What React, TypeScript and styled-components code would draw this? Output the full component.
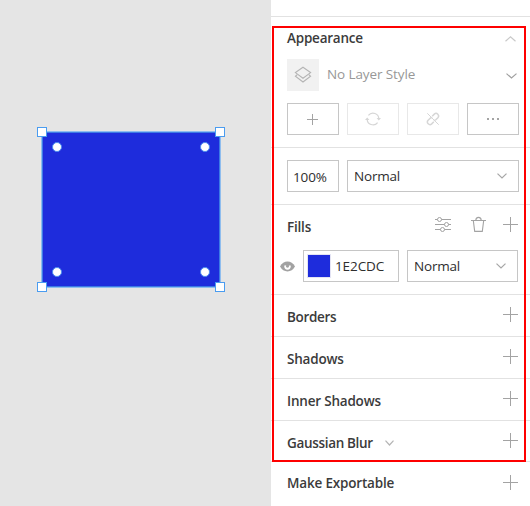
import React from "react";
import styled, { createGlobalStyle } from "styled-components";

const GlobalStyle = createGlobalStyle`
  *, *::before, *::after { box-sizing: border-box; }
  body { margin: 0; background: #fff; overflow: hidden; font-family: "Open Sans", "Noto Sans", sans-serif; }
  svg { display: block; flex: none; }
`;

const Workspace = styled.main`
  position: relative;
  display: flex;
  width: 530px;
  height: 506px;
  overflow: hidden;
`;

const Canvas = styled.div`
  position: relative;
  flex: none;
  width: 271px;
  background: #e5e5e5;
`;

const Shape = styled.div`
  position: absolute;
  left: 41px;
  top: 131px;
  width: 180px;
  height: 157px;
  background: #1e2cdc;
  border: 1px solid #8fbdee;
  box-shadow: inset 0 0 0 1px #3c7ae6;
`;

const Handle = styled.i<{ $x: number; $y: number }>`
  position: absolute;
  left: ${(p) => p.$x}px;
  top: ${(p) => p.$y}px;
  width: 10px;
  height: 10px;
  background: #fff;
  border: 1px solid #4a9cf0;
`;

const Dot = styled.i<{ $x: number; $y: number }>`
  position: absolute;
  left: ${(p) => p.$x}px;
  top: ${(p) => p.$y}px;
  width: 10px;
  height: 10px;
  border-radius: 50%;
  background: #fff;
  border: 1px solid #4a8cf0;
`;

const Inspector = styled.aside`
  flex: 1;
  margin-top: 16px;
  background: #fff;
`;

const Section = styled.section<{ $height: number; $top?: number }>`
  height: ${(p) => p.$height}px;
  padding: ${(p) => p.$top ?? 0}px 11px 0 16px;
  border-top: 1px solid #e2e2e2;
`;

const Row = styled.div<{ $gap?: number; $mt?: number }>`
  display: flex;
  align-items: flex-start;
  gap: ${(p) => p.$gap ?? 0}px;
  margin-top: ${(p) => p.$mt ?? 0}px;
`;

const Title = styled.h2<{ $ls: number; $mt?: number }>`
  margin: ${(p) => p.$mt ?? 0}px 0 0;
  font-size: 13.5px;
  line-height: 20px;
  font-weight: 600;
  letter-spacing: ${(p) => p.$ls}px;
  white-space: nowrap;
  color: #3b3b3b;
`;

const Value = styled.span<{ $ls?: number; $mt?: number; $muted?: boolean }>`
  margin-top: ${(p) => p.$mt ?? 0}px;
  font-size: 13.5px;
  line-height: 20px;
  letter-spacing: ${(p) => p.$ls ?? -0.1}px;
  white-space: nowrap;
  color: ${(p) => (p.$muted ? "#989898" : "#2e2e2e")};
`;

const Push = styled.span<{ $mt?: number; $mr?: number }>`
  margin: ${(p) => p.$mt ?? 0}px ${(p) => p.$mr ?? 0}px 0 auto;
`;

const StylePreview = styled.span`
  display: grid;
  place-items: center;
  width: 32px;
  height: 32px;
  background: #f1f1f1;
`;

const IconButton = styled.button<{ $dim?: boolean }>`
  display: grid;
  place-items: center;
  width: 52px;
  height: 32px;
  padding: 0 1px 0 0;
  background: #fff;
  border: 1px solid ${(p) => (p.$dim ? "#e8e8e8" : "#c6c6c6")};
  color: ${(p) => (p.$dim ? "#d6d6d6" : "#a4a4a4")};
`;

const Field = styled.div<{ $width: number; $left: number }>`
  display: flex;
  align-items: flex-start;
  width: ${(p) => p.$width}px;
  height: 32px;
  padding: 0 0 0 ${(p) => p.$left}px;
  border: 1px solid #c6c6c6;
`;

const Swatch = styled.span`
  width: 24px;
  height: 24px;
  margin: 3px 4px 0 0;
  background: #1e2cdc;
  border: 1px solid #e4e4f4;
`;

const Highlight = styled.div`
  position: absolute;
  left: 272px;
  top: 26px;
  width: 254px;
  height: 436px;
  border: 2px solid #fe0000;
  pointer-events: none;
`;

const IconSlot = styled.span<{ $mt?: number; $ml?: number; $mr?: number }>`
  margin: ${(p) => p.$mt ?? 0}px ${(p) => p.$mr ?? 0}px 0 ${(p) => p.$ml ?? 0}px;
`;

const Plus = ({ size = 15 }: { size?: number }) => (
  <svg width={size} height={size} viewBox={`0 0 ${size} ${size}`} stroke="#a3a3a3">
    <path d={`M0 ${size / 2}H${size}M${size / 2} 0V${size}`} />
  </svg>
);

const Chevron = ({ w = 9, h = 5, up = false, color = "#a6a6a6" }: { w?: number; h?: number; up?: boolean; color?: string }) => (
  <svg width={w + 1} height={h + 1} viewBox={`0 0 ${w + 1} ${h + 1}`} fill="none" stroke={color} strokeWidth="1.2">
    <path d={up ? `M.5 ${h + 0.2}L${(w + 1) / 2} .8L${w + 0.5} ${h + 0.2}` : `M.5 .6L${(w + 1) / 2} ${h}L${w + 0.5} .6`} />
  </svg>
);

const Layers = () => (
  <svg width="18" height="18" viewBox="0 0 18 18" fill="none" stroke="#b4b4b4" strokeWidth="1.1">
    <path d="M9 1.2L16.6 6.6L9 12.2L1.4 6.6Z" />
    <path d="M3.2 8.6L1.4 10.3L9 16L16.6 10.3L14.8 8.6" />
  </svg>
);

const Sync = () => (
  <svg width="16" height="14" viewBox="0 0 16 14" fill="none" stroke="currentColor" strokeWidth="1.2">
    <path d="M3.4 3.4A5.8 5.8 0 0 1 13.8 7.2M12.6 10.6A5.8 5.8 0 0 1 2.2 6.8" />
    <path d="M11.6 6L13.8 8.6L16 6ZM0 8L2.2 5.4L4.4 8Z" fill="currentColor" stroke="none" />
  </svg>
);

const Unlink = () => (
  <svg width="14" height="14" viewBox="0 0 14 14" fill="none" stroke="currentColor" strokeWidth="1.5">
    <path d="M6.2 4.2L8.3 2.1A2.55 2.55 0 0 1 11.9 5.7L9.8 7.8Q8.9 8.6 7.8 8.3M7.8 9.8L5.7 11.9A2.55 2.55 0 0 1 2.1 8.3L4.2 6.2Q5.1 5.4 6.2 5.7" />
    <path d="M1.3 1.3L12.7 12.7" strokeWidth="1" />
  </svg>
);

const More = () => (
  <svg width="14" height="4" viewBox="0 0 14 4" fill="#a4a4a4">
    <path d="M1 1h2v2h-2zM6 1h2v2h-2zM11 1h2v2h-2z" />
  </svg>
);

const Sliders = () => (
  <svg width="16" height="16" viewBox="0 0 16 16" fill="none" stroke="#a3a3a3">
    <path d="M0 3.5H2.5M6.5 3.5H16M0 8.5H9.5M13.5 8.5H16M0 13.5H5.5M9.5 13.5H16" />
    <circle cx="4.5" cy="3.5" r="2" />
    <circle cx="11.5" cy="8.5" r="2" />
    <circle cx="7.5" cy="13.5" r="2" />
  </svg>
);

const Trash = () => (
  <svg width="15" height="16" viewBox="0 0 15 16" fill="none" stroke="#a3a3a3" strokeWidth="1.1">
    <path d="M0 4.5H15M2.3 4.5L3.7 15.4H11.3L12.7 4.5M4.8 4.5C4.8 .3 10.2 .3 10.2 4.5" />
  </svg>
);

const Eye = () => (
  <svg width="15" height="11" viewBox="0 0 15 11">
    <path d="M0 5.5Q2.8 .6 7.5 .6T15 5.5Q12.2 10.4 7.5 10.4T0 5.5Z" fill="#a2a2a2" />
    <path d="M4.3 4.6A3.3 3.3 0 1 0 10.7 4.6L9.2 4.4A1.8 1.8 0 0 1 7.2 4.3Z" fill="#fff" />
    <circle cx="7.5" cy="5.1" r="1.6" fill="#a2a2a2" />
  </svg>
);

const effects = [
  { name: "Borders", ls: -0.35, height: 42 },
  { name: "Shadows", ls: -0.2, height: 42 },
  { name: "Inner Shadows", ls: -0.2, height: 42 },
  { name: "Gaussian Blur", ls: -0.33, height: 41, options: true },
  { name: "Make Exportable", ls: -0.18, height: 45, top: 11, plusTop: 2 },
];

const corners = [[37, 127], [215, 127], [37, 282], [215, 282]];
const radii = [[52, 142], [200, 142], [52, 267], [200, 267]];

export default function App() {
  return (
    <>
      <GlobalStyle />
      <Workspace>
        <Canvas>
          <Shape />
          {corners.map(([x, y]) => <Handle key={`${x}-${y}`} $x={x} $y={y} />)}
          {radii.map(([x, y]) => <Dot key={`${x}-${y}`} $x={x} $y={y} />)}
        </Canvas>
        <Inspector>
          <Section $height={131} $top={11}>
            <Row>
              <Title $ls={-0.22}>Appearance</Title>
              <Push $mt={8} $mr={3}><Chevron w={10} up color="#c9c9c9" /></Push>
            </Row>
            <Row $mt={11}>
              <StylePreview><Layers /></StylePreview>
              <IconSlot $ml={8}><Value as="div" $mt={5} $muted>No Layer Style</Value></IconSlot>
              <Push $mt={14} $mr={2}><Chevron w={10} color="#a0a0a0" /></Push>
            </Row>
            <Row $gap={8} $mt={12}>
              <IconButton aria-label="Add layer style"><Plus size={11} /></IconButton>
              <IconButton $dim aria-label="Sync"><Sync /></IconButton>
              <IconButton $dim aria-label="Unlink"><Unlink /></IconButton>
              <IconButton aria-label="More"><More /></IconButton>
            </Row>
          </Section>
          <Section $height={57} $top={12}>
            <Row $gap={8}>
              <Field $width={52} $left={5}><Value $mt={6}>100%</Value></Field>
              <Field $width={172} $left={6}>
                <Value $mt={5} $ls={-0.2}>Normal</Value>
                <Push $mt={12} $mr={11}><Chevron /></Push>
              </Field>
            </Row>
          </Section>
          <Section $height={90} $top={12}>
            <Row>
              <Title $ls={-0.2}>Fills</Title>
              <Push $mt={-1}><Sliders /></Push>
              <IconSlot $ml={20} $mt={-1}><Trash /></IconSlot>
              <IconSlot $ml={17} $mr={1}><Plus /></IconSlot>
            </Row>
            <Row $mt={13}>
              <IconSlot $ml={-7} $mt={11}><Eye /></IconSlot>
              <IconSlot $ml={8}>
                <Row $gap={8}>
                  <Field $width={96} $left={3}><Swatch /><Value $mt={5}>1E2CDC</Value></Field>
                  <Field $width={111} $left={6}>
                    <Value $mt={5} $ls={-0.2}>Normal</Value>
                    <Push $mt={12} $mr={11}><Chevron /></Push>
                  </Field>
                </Row>
              </IconSlot>
            </Row>
          </Section>
          {effects.map((e) => (
            <Section key={e.name} $height={e.height} $top={e.top ?? 12}>
              <Row>
                <Title $ls={e.ls}>{e.name}</Title>
                {e.options && <IconSlot $mt={7} $ml={12}><Chevron w={8} color="#b4b4b4" /></IconSlot>}
                <Push $mt={e.plusTop ?? 0} $mr={1}><Plus /></Push>
              </Row>
            </Section>
          ))}
        </Inspector>
        <Highlight />
      </Workspace>
    </>
  );
}
